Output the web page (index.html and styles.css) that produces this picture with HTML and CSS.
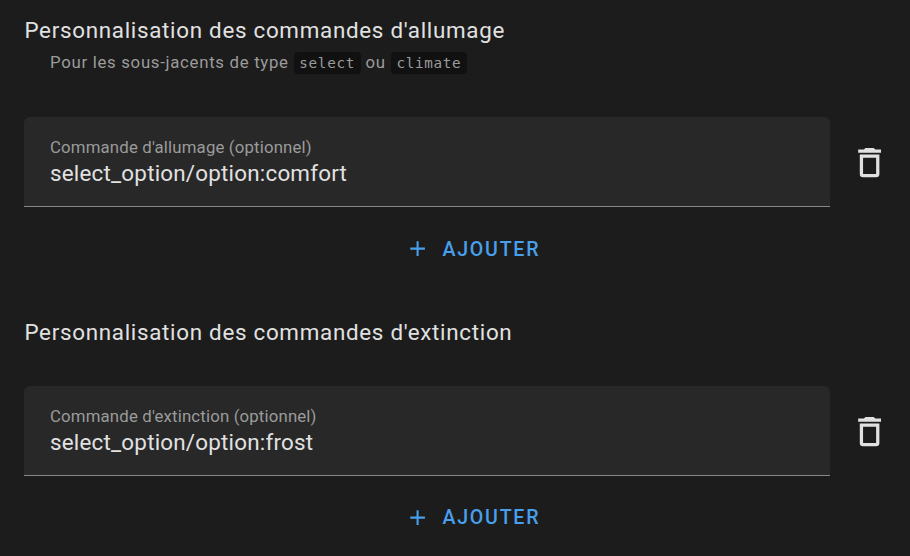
FILE: index.html
```html
<!DOCTYPE html>
<html lang="fr">
<head>
<meta charset="utf-8">
<title>Personnalisation des commandes</title>
<link rel="stylesheet" href="styles.css">
</head>
<body>
<main>
  <section class="group group-on">
    <h2>Personnalisation des commandes d'allumage</h2>
    <p class="hint">Pour les sous-jacents de type <code>select</code> ou <code>climate</code></p>
    <div class="row">
      <label class="field"><span class="label">Commande d'allumage (optionnel)</span><span class="value">select_option/option:comfort</span></label>
      <button class="trash" aria-label="Supprimer"><svg viewBox="0 0 24 24"><path d="M6,19A2,2 0 0,0 8,21H16A2,2 0 0,0 18,19V7H6V19M8,9H16V19H8V9M15.5,4L14.5,3H9.5L8.5,4H5V6H19V4H15.5Z"/></svg></button>
    </div>
    <button class="add"><svg viewBox="0 0 24 24"><path d="M19,13H13V19H11V13H5V11H11V5H13V11H19V13Z"/></svg><span>AJOUTER</span></button>
  </section>
  <section class="group group-off">
    <h2>Personnalisation des commandes d'extinction</h2>
    <div class="row">
      <label class="field"><span class="label">Commande d'extinction (optionnel)</span><span class="value">select_option/option:frost</span></label>
      <button class="trash" aria-label="Supprimer"><svg viewBox="0 0 24 24"><path d="M6,19A2,2 0 0,0 8,21H16A2,2 0 0,0 18,19V7H6V19M8,9H16V19H8V9M15.5,4L14.5,3H9.5L8.5,4H5V6H19V4H15.5Z"/></svg></button>
    </div>
    <button class="add"><svg viewBox="0 0 24 24"><path d="M19,13H13V19H11V13H5V11H11V5H13V11H19V13Z"/></svg><span>AJOUTER</span></button>
  </section>
</main>
</body>
</html>
```
FILE: styles.css
```css
* { box-sizing: border-box; }
body {
  margin: 0;
  background: #1c1c1c;
  color: #e1e1e1;
  font-family: Roboto, sans-serif;
  overflow: hidden;
}
main { height: 556px; padding: 14px 24px 0; }
h2 {
  margin: 0;
  padding-left: 0.4px;
  font-size: 22.4px;
  line-height: 32px;
  font-weight: 400;
  letter-spacing: 0.7px;
}
.hint {
  margin: 0 0 0 26px;
  height: 32px;
  font-size: 16.8px;
  line-height: 32px;
  letter-spacing: 0.7px;
  color: #9b9b9b;
}
code {
  padding: 0.2em 0.4em;
  border-radius: 4px;
  background: #111;
  font-family: "DejaVu Sans Mono", monospace;
  font-size: 85%;
}
.row { display: flex; align-items: center; margin-top: 39px; }
.group-off .row { margin-top: 38px; }
.field {
  flex: none;
  width: 806px;
  height: 90px;
  padding: 20px 26px 0;
  display: flex;
  flex-direction: column;
  background: #282828;
  border-bottom: 1px solid #868686;
  border-radius: 6px 6px 0 0;
}
.label { font-size: 16.8px; line-height: 20px; color: #9b9b9b; letter-spacing: 0.009375em; }
.value { font-size: 22.4px; line-height: 32px; letter-spacing: 0.009375em; }
button { border: 0; padding: 0; background: none; font: inherit; }
svg { display: block; fill: currentColor; }
.trash { flex: none; margin: 1px 0 0 20px; color: #e1e1e1; }
.trash svg { width: 39.2px; height: 39.2px; }
.add {
  display: flex;
  align-items: center;
  gap: 12.4px;
  height: 32px;
  margin: 26px 0 0 380.9px;
  color: #489fec;
  font-size: 19.6px;
  font-weight: 500;
  letter-spacing: 0.0892857em;
}
.add svg { width: 25.2px; height: 25.2px; }
.group-off .add { margin-top: 25px; }
.group-off .add svg { margin-top: 1px; }
.group-off { margin-top: 51px; }
```
